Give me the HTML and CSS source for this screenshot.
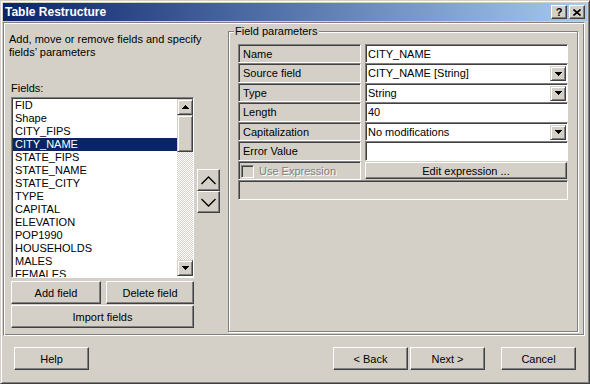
FILE: index.html
```html
<!DOCTYPE html>
<html lang="en">
  <head>
    <meta charset="UTF-8" />
    <title>Table Restructure</title>
    <link rel="stylesheet" href="styles.css">
  </head>
  <body>
    <div class="window">
      <div class="titlebar">
        <span class="title">Table Restructure</span>
        <div class="caption-buttons">
          <span class="cap-btn help">?</span>
          <span class="cap-btn">
            <svg width="8" height="7" viewBox="0 0 8 7"><path d="M0.5 0.5L7.5 6.5M7.5 0.5L0.5 6.5" stroke="#000" stroke-width="1.6" fill="none"/></svg>
          </span>
        </div>
      </div>

      <div class="main">
        <div class="left">
          <p class="desc">Add, move or remove fields and specify<br />fields’ parameters</p>
          <div class="fields-label">Fields:</div>

          <div class="list-row">
            <div class="listbox">
              <ul class="items">
                <li>FID</li>
                <li>Shape</li>
                <li>CITY_FIPS</li>
                <li class="selected">CITY_NAME</li>
                <li>STATE_FIPS</li>
                <li>STATE_NAME</li>
                <li>STATE_CITY</li>
                <li>TYPE</li>
                <li>CAPITAL</li>
                <li>ELEVATION</li>
                <li>POP1990</li>
                <li>HOUSEHOLDS</li>
                <li>MALES</li>
                <li>FEMALES</li>
              </ul>
              <div class="scrollbar">
                <div class="sb-btn">
                  <svg width="7" height="4" viewBox="0 0 7 4"><path d="M3.5 0L7 4H0z" fill="#000"/></svg>
                </div>
                <div class="sb-thumb"></div>
                <div class="sb-track"></div>
                <div class="sb-btn">
                  <svg width="7" height="4" viewBox="0 0 7 4"><path d="M0 0H7L3.5 4z" fill="#000"/></svg>
                </div>
              </div>
            </div>

            <div class="move-buttons">
              <button class="btn arrow">
                <svg width="15" height="9" viewBox="0 0 15 9"><polyline points="0.5,8 7.5,1 14.5,8" stroke="#000" stroke-width="1.3" fill="none"/></svg>
              </button>
              <button class="btn arrow">
                <svg width="15" height="9" viewBox="0 0 15 9"><polyline points="0.5,1 7.5,8 14.5,1" stroke="#000" stroke-width="1.3" fill="none"/></svg>
              </button>
            </div>
          </div>

          <div class="field-buttons">
            <button class="btn add">Add field</button>
            <button class="btn delete">Delete field</button>
          </div>
          <button class="btn import">Import fields</button>
        </div>

        <fieldset class="params">
          <legend>Field parameters</legend>
          <div class="grid">
            <div class="cell label">Name</div>
            <div class="cell value">CITY_NAME</div>

            <div class="cell label">Source field</div>
            <div class="cell value combo">
              <span>CITY_NAME [String]</span>
              <span class="drop"><svg width="7" height="4" viewBox="0 0 7 4"><path d="M0 0H7L3.5 4z" fill="#000"/></svg></span>
            </div>

            <div class="cell label">Type</div>
            <div class="cell value combo">
              <span>String</span>
              <span class="drop"><svg width="7" height="4" viewBox="0 0 7 4"><path d="M0 0H7L3.5 4z" fill="#000"/></svg></span>
            </div>

            <div class="cell label">Length</div>
            <div class="cell value">40</div>

            <div class="cell label">Capitalization</div>
            <div class="cell value combo">
              <span>No modifications</span>
              <span class="drop"><svg width="7" height="4" viewBox="0 0 7 4"><path d="M0 0H7L3.5 4z" fill="#000"/></svg></span>
            </div>

            <div class="cell label">Error Value</div>
            <div class="cell value"></div>

            <div class="cell label disabled">
              <span class="checkbox"></span>
              Use Expression
            </div>
            <button class="btn edit">Edit expression ...</button>

            <div class="cell wide"></div>
          </div>
        </fieldset>
      </div>

      <div class="footer">
        <button class="btn dlg">Help</button>
        <div class="spacer"></div>
        <button class="btn dlg">&lt; Back</button>
        <button class="btn dlg next">Next &gt;</button>
        <button class="btn dlg cancel">Cancel</button>
      </div>
    </div>
  </body>
</html>
```

FILE: styles.css
```css
body {
  margin: 0;
  font-family: "Liberation Sans", Arial, sans-serif;
  font-size: 11px;
  color: #000;
  background-color: #d4d0c8;
}

.window {
  box-sizing: border-box;
  width: 590px;
  height: 384px;
  padding: 2px;
  background-color: #d4d0c8;
  border: 1px solid;
  border-color: #d4d0c8 #404040 #404040 #d4d0c8;
  box-shadow: inset 1px 1px #fff, inset -1px -1px #808080;
  display: flex;
  flex-direction: column;
}

/* title bar */
.titlebar {
  height: 18px;
  flex: none;
  display: flex;
  align-items: center;
  justify-content: space-between;
  padding: 0 2px;
  background: linear-gradient(to right, #0a246a, #a6caf0);
}

.title {
  color: #fff;
  font-weight: bold;
  font-size: 12px;
}

.caption-buttons {
  display: flex;
  gap: 2px;
}

.cap-btn {
  box-sizing: border-box;
  width: 16px;
  height: 14px;
  display: flex;
  align-items: center;
  justify-content: center;
  background-color: #d4d0c8;
  border: 1px solid;
  border-color: #fff #404040 #404040 #fff;
  box-shadow: inset -1px -1px #808080;
}

.cap-btn.help {
  font-weight: bold;
  font-size: 11px;
  line-height: 12px;
}

/* main etched panel */
.main {
  box-sizing: border-box;
  width: 582px;
  height: 314px;
  margin-top: 1px;
  flex: none;
  display: flex;
  border: 1px solid;
  border-color: #808080 #fff #fff #808080;
  box-shadow: inset 1px 1px #fff, inset -1px -1px #808080;
}

.left {
  width: 224px;
  flex: none;
  display: flex;
  flex-direction: column;
}

.desc {
  margin: 10px 0 0 5px;
  line-height: 13px;
}

.fields-label {
  margin: 23px 0 0 7px;
  line-height: 13px;
}

.list-row {
  display: flex;
  margin: 2px 0 0 7px;
}

.listbox {
  box-sizing: border-box;
  width: 183px;
  height: 181px;
  display: flex;
  background-color: #fff;
  border: 1px solid;
  border-color: #808080 #fff #fff #808080;
  box-shadow: inset 1px 1px #404040;
  padding: 1px 0 0 1px;
}

.items {
  list-style: none;
  margin: 0;
  padding: 0;
  flex: 1;
  overflow: hidden;
}

.items li {
  height: 13px;
  line-height: 13px;
  padding-left: 2px;
  white-space: nowrap;
}

.items li.selected {
  background-color: #0a246a;
  color: #fff;
}

.scrollbar {
  width: 16px;
  display: flex;
  flex-direction: column;
  margin-bottom: 1px;
}

.sb-btn,
.sb-thumb,
.drop {
  box-sizing: border-box;
  background-color: #d4d0c8;
  border: 1px solid;
  border-color: #d4d0c8 #404040 #404040 #d4d0c8;
  box-shadow: inset 1px 1px #fff, inset -1px -1px #808080;
}

.sb-btn {
  height: 16px;
  display: flex;
  align-items: center;
  justify-content: center;
}

.sb-btn svg,
.drop svg {
  shape-rendering: crispEdges;
}

.sb-thumb {
  height: 37px;
}

.sb-track {
  flex: 1;
  background-image: repeating-conic-gradient(#fff 0 25%, #d4d0c8 0 50%);
  background-size: 2px 2px;
}

.btn {
  box-sizing: border-box;
  padding: 0;
  background-color: #d4d0c8;
  border: 1px solid;
  border-color: #fff #404040 #404040 #fff;
  box-shadow: inset -1px -1px #808080;
  font-family: "Liberation Sans", Arial, sans-serif;
  font-size: 11px;
  color: #000;
}

.move-buttons {
  display: flex;
  flex-direction: column;
  margin: 72px 0 0 3px;
}

.btn.arrow {
  width: 23px;
  height: 22px;
  display: flex;
  align-items: center;
  justify-content: center;
}

.field-buttons {
  display: flex;
  margin: 3px 0 0 7px;
}

.btn.add {
  width: 90px;
  height: 23px;
}

.btn.delete {
  width: 88px;
  height: 23px;
  margin-left: 5px;
}

.btn.import {
  width: 183px;
  height: 23px;
  margin: 1px 0 0 7px;
}

/* field parameters group */
.params {
  box-sizing: border-box;
  width: 350px;
  height: 307px;
  margin: 2px 0 0 0;
  padding: 0;
  min-width: 0;
  border: 1px solid #808080;
  box-shadow: inset 1px 1px #fff, 1px 1px #fff;
}

.params legend {
  margin-left: 5px;
  padding: 0 1px;
  line-height: 13px;
  background-color: #d4d0c8;
}

.grid {
  display: grid;
  grid-template-columns: 123px 203px;
  grid-template-rows: 19px 20px 19px 20px 19px 20px 19px 20px;
  column-gap: 4px;
  margin: 6px 0 0 9px;
}

.cell {
  box-sizing: border-box;
  display: flex;
  align-items: center;
  border: 1px solid;
  border-color: #808080 #fff #fff #808080;
  box-shadow: inset 1px 1px #404040;
  white-space: nowrap;
}

.cell.label {
  padding-left: 4px;
}

.cell.value {
  background-color: #fff;
  padding-left: 2px;
}

.cell.combo {
  justify-content: space-between;
  padding-right: 1px;
}

.drop {
  width: 16px;
  height: 15px;
  margin-top: 1px;
  display: flex;
  align-items: center;
  justify-content: center;
}

.cell.disabled {
  padding-left: 2px;
  color: #808080;
  text-shadow: 1px 1px #fff;
}

.checkbox {
  box-sizing: border-box;
  width: 13px;
  height: 13px;
  margin: 1px 5px 0 0;
  border: 1px solid;
  border-color: #808080 #fff #fff #808080;
  box-shadow: inset 1px 1px #404040;
}

.btn.edit {
  margin: 1px 1px 1px 0;
}

.cell.wide {
  grid-column: 1 / 3;
}

/* dialog buttons */
.footer {
  display: flex;
  margin-top: 11px;
  padding: 0 11px;
}

.spacer {
  flex: 1;
}

.btn.dlg {
  width: 75px;
  height: 23px;
}

.btn.next {
  margin-left: 2px;
}

.btn.cancel {
  margin-left: 16px;
}
```
